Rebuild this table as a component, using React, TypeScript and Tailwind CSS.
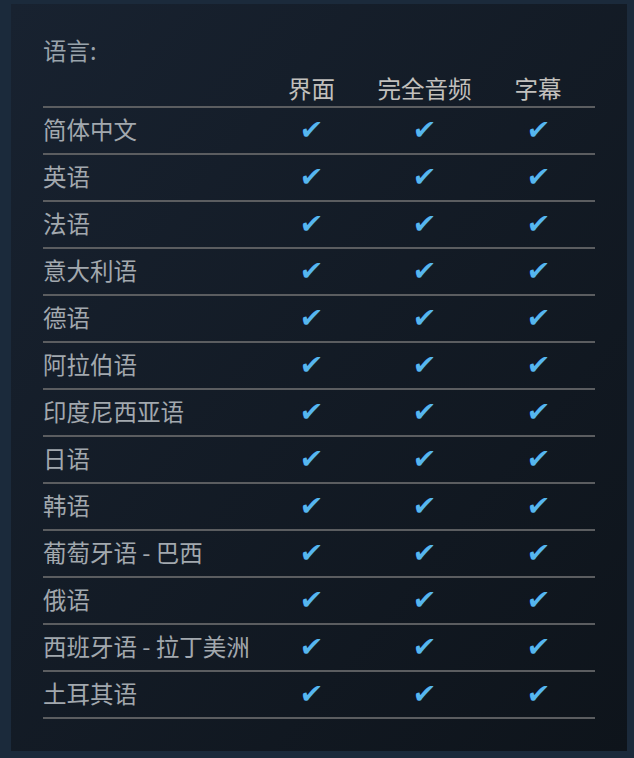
const languages = [
  "简体中文",
  "英语",
  "法语",
  "意大利语",
  "德语",
  "阿拉伯语",
  "印度尼西亚语",
  "日语",
  "韩语",
  "葡萄牙语 - 巴西",
  "俄语",
  "西班牙语 - 拉丁美洲",
  "土耳其语",
];

const Check = () => (
  <span className="inline-block -skew-x-6 text-[#56b6ef] text-[27px] leading-none font-bold font-['DejaVu_Sans',sans-serif]">
    ✔
  </span>
);

export default function App() {
  return (
    <div className="h-[758px] w-[634px] bg-[#1b2a3b] pt-[4px] pl-[11px] font-['Noto_Sans_CJK_SC','Noto_Sans',sans-serif]">
      <div className="w-[616px] h-[747px] bg-gradient-to-br from-[#182230] to-[#0e141b] px-8 pt-8">
        <div className="h-8 leading-7 text-[23.5px] text-[#9aa3ab]">语言:</div>

        <div className="grid grid-cols-[212px_113px_113px_114px] h-[40px] items-end border-b-2 border-[#5b5d60] text-[23.5px] text-[#c2c0bd]">
          <div />
          <div className="text-center leading-9">界面</div>
          <div className="text-center leading-9">完全音频</div>
          <div className="text-center leading-9">字幕</div>
        </div>

        {languages.map((lang) => (
          <div
            key={lang}
            className="grid grid-cols-[212px_113px_113px_114px] h-[47px] pb-[2px] items-center border-b-2 border-[#5b5d60] text-[23.5px] text-[#a2a8ae]"
          >
            <div className="whitespace-nowrap">{lang}</div>
            <div className="text-center">
              <Check />
            </div>
            <div className="text-center">
              <Check />
            </div>
            <div className="text-center">
              <Check />
            </div>
          </div>
        ))}
      </div>
    </div>
  );
}
